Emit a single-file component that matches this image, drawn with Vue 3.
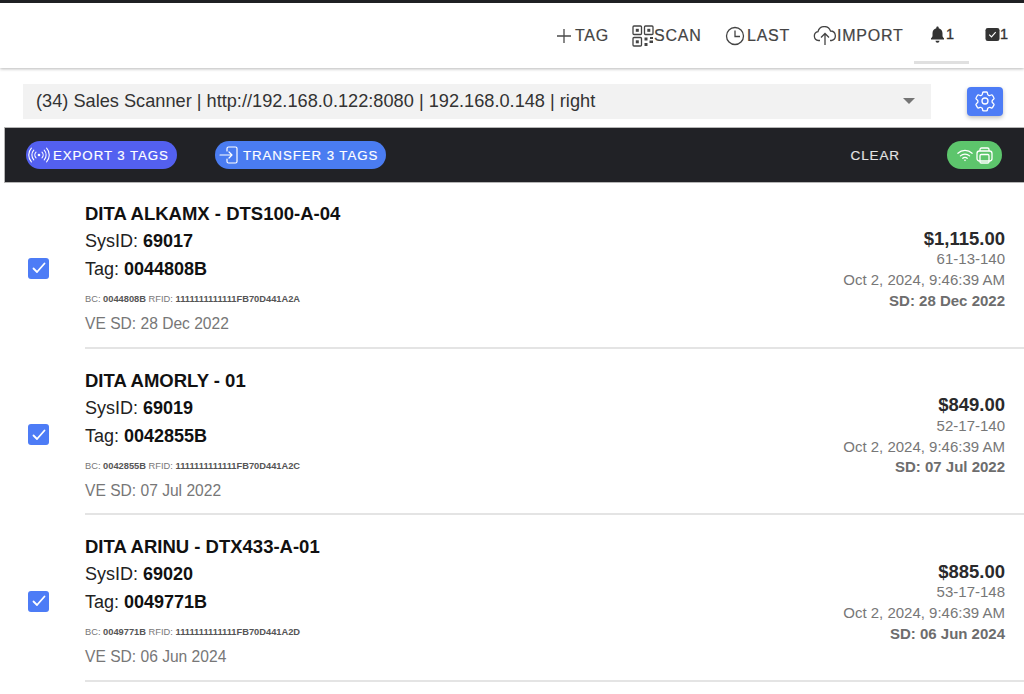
<script setup>
const rows = [
  { name: 'DITA ALKAMX - DTS100-A-04', sys: '69017', tag: '0044808B', rfid: '1111111111111FB70D441A2A', sd: '28 Dec 2022', price: '$1,115.00', size: '61-13-140' },
  { name: 'DITA AMORLY - 01', sys: '69019', tag: '0042855B', rfid: '1111111111111FB70D441A2C', sd: '07 Jul 2022', price: '$849.00', size: '52-17-140' },
  { name: 'DITA ARINU - DTX433-A-01', sys: '69020', tag: '0049771B', rfid: '1111111111111FB70D441A2D', sd: '06 Jun 2024', price: '$885.00', size: '53-17-148' },
]
</script>

<template>
  <div class="page">
    <header class="top">
      <nav class="nav">
        <a class="nav-item tag">
          <svg width="18" height="18" viewBox="0 0 18 18" fill="none" stroke="#4a4a4a" stroke-width="1.3"><path d="M9 2v14M2 9h14"/></svg>
          <span>TAG</span>
        </a>
        <a class="nav-item scan">
          <svg width="22" height="22" viewBox="0 0 22 22" fill="none" stroke="#444" stroke-width="1.3">
            <rect x="1" y="1" width="8.5" height="8.5" rx="1"/><rect x="12.5" y="1" width="8.5" height="8.5" rx="1"/><rect x="1" y="12.5" width="8.5" height="8.5" rx="1"/>
            <rect x="3.8" y="3.8" width="3" height="3" fill="#444" stroke="none"/><rect x="15.3" y="3.8" width="3" height="3" fill="#444" stroke="none"/><rect x="3.8" y="15.3" width="3" height="3" fill="#444" stroke="none"/>
            <path d="M12.5 12.5h3v3h-3zM17.5 15.5h3.500v2.500h-3.500zM12.500 18h3v3h-3zM18 12h3v2h-3z" fill="#444" stroke="none"/>
          </svg>
          <span>SCAN</span>
        </a>
        <a class="nav-item last">
          <svg width="20" height="20" viewBox="0 0 20 20" fill="none" stroke="#444" stroke-width="1.3"><circle cx="10" cy="10" r="8.500"/><path d="M10 4.500V10.500H15"/></svg>
          <span>LAST</span>
        </a>
        <a class="nav-item import">
          <svg width="24" height="20" viewBox="0 0 24 20" fill="none" stroke="#444" stroke-width="1.3"><path d="M7 14.500H5.500A4.500 4.500 0 0 1 5 5.600 6.500 6.500 0 0 1 17.500 5a4.800 4.800 0 0 1 1 9.500H17"/><path d="M12 19V8M8 11.500 12 7.500l4 4"/></svg>
          <span>IMPORT</span>
        </a>
        <a class="nav-item small bell">
          <svg width="17" height="17" viewBox="0 0 16 17" fill="#333"><path d="M8 0.500c.7 0 1.200.5 1.200 1.200v.5c2.400.6 3.800 2.600 3.800 5v2.600c0 1 .6 1.700 1.500 2.500v1.100H1.500v-1.100C2.400 11.500 3 10.800 3 9.800V7.200c0-2.400 1.400-4.400 3.800-5v-.5C6.800 1 7.300.5 8 .5zM6 14.800h4a2 2 0 0 1-4 0z"/></svg>
          <span>1</span>
        </a>
        <a class="nav-item small check">
          <svg width="15" height="15" viewBox="0 0 16 16"><rect x="0.500" y="1" width="15" height="14" rx="2.500" fill="#333"/><path d="M4.500 8.200l2.400 2.300 4.500-5" fill="none" stroke="#fff" stroke-width="1.200"/></svg>
          <span>1</span>
        </a>
      </nav>
    </header>

    <section class="select-row">
      <div class="select">
        <span>(34) Sales Scanner | http://192.168.0.122:8080 | 192.168.0.148 | right</span>
        <i class="caret"></i>
      </div>
      <button class="gear">
        <svg width="24" height="24" viewBox="0 0 24 24" fill="none" stroke="#fff" stroke-width="1.300" stroke-linecap="round" stroke-linejoin="round"><path d="M9.600 3.900c.1-.5.600-.9 1.100-.9h2.600c.5 0 1 .4 1.100.9l.2 1.300c.1.400.3.700.7.900l.6.300c.3.200.7.200 1 .1l1.300-.5c.5-.2 1.100 0 1.400.5l1.300 2.300c.3.500.1 1.100-.3 1.400l-1 .9c-.3.200-.5.600-.5 1v.7c0 .4.200.8.500 1l1 .9c.4.300.6.900.3 1.400l-1.300 2.300c-.3.500-.9.700-1.400.5l-1.300-.5c-.3-.1-.7-.1-1 .1l-.6.300c-.4.200-.6.500-.7.900l-.2 1.300c-.1.500-.6.900-1.100.9h-2.600c-.5 0-1-.4-1.100-.9l-.2-1.300c-.1-.4-.3-.7-.7-.9l-.6-.3c-.3-.2-.7-.2-1-.1l-1.300.5c-.5.200-1.100 0-1.400-.5l-1.300-2.300c-.3-.5-.1-1.100.3-1.400l1-.9c.3-.2.500-.6.500-1v-.7c0-.4-.2-.8-.5-1l-1-.9c-.4-.3-.6-.9-.3-1.400l1.300-2.300c.3-.5.900-.7 1.400-.5l1.300.5c.3.100.7.100 1-.1l.6-.3c.4-.2.600-.5.700-.9z"/><circle cx="12" cy="12" r="3"/></svg>
      </button>
    </section>

    <section class="bar">
      <button class="pill export">
        <svg width="22" height="16" viewBox="0 0 22 16" fill="none" stroke="#fff" stroke-width="1.100" stroke-linecap="round"><circle cx="11" cy="8" r="1.300" fill="#fff" stroke="none"/><path d="M8 5.200a4 4 0 0 0 0 5.600M14 5.200a4 4 0 0 1 0 5.600M5.800 3.200a7 7 0 0 0 0 9.600M16.200 3.200a7 7 0 0 1 0 9.600M3.400 1.200a10 10 0 0 0 0 13.600M18.600 1.200a10 10 0 0 1 0 13.600"/></svg>
        <span>EXPORT 3 TAGS</span>
      </button>
      <button class="pill transfer">
        <svg width="20" height="18" viewBox="0 0 20 18" fill="none" stroke="#fff" stroke-width="1.200" stroke-linecap="round" stroke-linejoin="round"><path d="M8 5V2.500A1.500 1.500 0 0 1 9.500 1h7A1.500 1.500 0 0 1 18 2.500v13a1.500 1.500 0 0 1-1.500 1.500h-7A1.500 1.500 0 0 1 8 15.500V13"/><path d="M1 9h12M10 6l3 3-3 3"/></svg>
        <span>TRANSFER 3 TAGS</span>
      </button>
      <span class="spacer"></span>
      <button class="clear">CLEAR</button>
      <button class="pill status">
        <svg width="16" height="14" viewBox="0 0 18 14" fill="none" stroke="#fff" stroke-width="1.400" stroke-linecap="round"><path d="M1 5a11.500 11.500 0 0 1 16 0M3.800 8a7.500 7.500 0 0 1 10.400 0M6.500 10.700a3.500 3.500 0 0 1 5 0"/><circle cx="9" cy="13" r=".9" fill="#fff" stroke="none"/></svg>
        <svg width="17" height="17" viewBox="0 0 17 17" fill="none" stroke="#fff" stroke-width="1.300" stroke-linejoin="round"><path d="M4 4V2.500A1.500 1.500 0 0 1 5.500 1h6A1.500 1.500 0 0 1 13 2.500V4"/><rect x="1" y="4" width="15" height="10" rx="2.500"/><rect x="4" y="7.500" width="9" height="8.500" rx="1.200"/></svg>
      </button>
    </section>

    <ul class="list">
      <li v-for="r in rows" :key="r.tag" class="row">
        <span class="check-cell">
          <span class="box">
            <svg width="14" height="12" viewBox="0 0 14 12" fill="none" stroke="#fff" stroke-width="1.800" stroke-linecap="round" stroke-linejoin="round"><path d="M1.500 6.500 5 10l7.500-8.500"/></svg>
          </span>
        </span>
        <div class="body">
          <div class="left">
            <h3>{{ r.name }}</h3>
            <p class="line">SysID: <b>{{ r.sys }}</b></p>
            <p class="line">Tag: <b>{{ r.tag }}</b></p>
            <p class="codes">BC: <b>{{ r.tag }}</b> RFID: <b>{{ r.rfid }}</b></p>
            <p class="ve">VE SD: {{ r.sd }}</p>
          </div>
          <div class="right">
            <p class="price">{{ r.price }}</p>
            <p>{{ r.size }}</p>
            <p>Oct 2, 2024, 9:46:39 AM</p>
            <p class="sd">SD: {{ r.sd }}</p>
          </div>
        </div>
      </li>
    </ul>
  </div>
</template>

<style>
html, body { margin: 0; background: #fff; }
</style>

<style scoped>
.page {
  width: 1024px;
  height: 694px;
  overflow: hidden;
  background: #fff;
  font-family: "Liberation Sans", Arial, sans-serif;
  color: #1c1c1e;
  box-sizing: border-box;
}
.top {
  height: 65px;
  border-top: 3px solid #1f2023;
  box-shadow: 0 1px 3px rgba(0, 0, 0, .28);
  box-sizing: content-box;
}
.nav {
  display: flex;
  justify-content: flex-end;
  height: 100%;
}
.nav-item {
  display: flex;
  align-items: center;
  font-size: 16px;
  letter-spacing: .75px;
  color: #444;
  position: relative;
  white-space: nowrap;
  -webkit-text-stroke: .2px #444;
}
.nav-item svg { flex: none; }
.nav-item.tag { width: 53px; gap: 2px; margin-right: 24px; }
.nav-item.scan { width: 69px; gap: 0; margin-right: 24px; }
.nav-item.last { width: 64px; gap: 2px; margin-right: 24px; }
.nav-item.import { width: 89px; margin-right: 12px; }
.nav-item.small { font-size: 14.500px; color: #333; letter-spacing: 0; padding-bottom: 3px; -webkit-text-stroke: .35px #333; }
.nav-item.bell { width: 55px; justify-content: center; margin-right: 16px; }
.nav-item.bell::after {
  content: "";
  position: absolute;
  left: 0;
  right: 0;
  bottom: 4px;
  height: 3px;
  background: #e0e0e0;
}
.nav-item.check { width: 23px; margin-right: 16px; }
.select-row {
  display: flex;
  align-items: center;
  height: 60px;
  padding: 0 21px 0 23px;
  justify-content: space-between;
}
.select {
  width: 908px;
  height: 35px;
  margin-top: 6px;
  background: #f2f2f2;
  display: flex;
  align-items: center;
  justify-content: space-between;
  padding: 0 16px 0 13px;
  box-sizing: border-box;
  font-size: 18.200px;
  color: #333;
}
.caret {
  width: 0;
  height: 0;
  border-left: 6px solid transparent;
  border-right: 6px solid transparent;
  border-top: 6px solid #757575;
}
.gear {
  width: 36px;
  height: 29px;
  margin-top: 6px;
  border: 0;
  padding: 0;
  border-radius: 4px;
  background: #4d7cf6;
  box-shadow: 0 2px 4px rgba(0, 0, 0, .25);
  display: flex;
  align-items: center;
  justify-content: center;
}
.bar {
  margin-left: 5px;
  height: 54px;
  background: #212226;
  box-shadow: 0 0 0 1px #b5b5b5;
  display: flex;
  align-items: center;
  padding: 0 22px 0 21px;
  box-sizing: border-box;
}
.pill {
  height: 28px;
  border: 0;
  border-radius: 14px;
  display: flex;
  align-items: center;
  padding: 0;
  color: #fff;
  font: 13.300px "Liberation Sans", Arial, sans-serif;
  letter-spacing: .92px;
  white-space: nowrap;
  box-sizing: border-box;
  flex: none;
  -webkit-text-stroke: .15px #fff;
}
.pill svg { flex: none; }
.export { width: 151px; background: #5360f0; padding-left: 2px; gap: 3px; margin-right: 38px; }
.transfer { width: 171px; background: #4a7cf1; padding-left: 4px; gap: 4px; }
.spacer { flex: 1; }
.clear {
  border: 0;
  background: none;
  padding: 0;
  margin-right: 47px;
  color: #e4e4e4;
  font: 13.500px "Liberation Sans", Arial, sans-serif;
  letter-spacing: .9px;
  -webkit-text-stroke: .15px #e4e4e4;
}
.status { width: 55px; background: #5dc56c; justify-content: center; gap: 3px; }
.list { list-style: none; margin: 0; padding: 0; }
.row {
  display: flex;
  height: 166.500px;
}
.check-cell {
  width: 85px;
  flex: none;
  display: flex;
  align-items: center;
  padding: 6px 0 0 28px;
  box-sizing: border-box;
}
.box {
  width: 21px;
  height: 21px;
  border-radius: 3px;
  background: #4d7cf6;
  display: flex;
  align-items: center;
  justify-content: center;
}
.body {
  flex: 1;
  display: flex;
  justify-content: space-between;
  align-items: flex-start;
  padding: 0 19px 0 0;
  border-bottom: 2px solid #e4e4e4;
  box-sizing: border-box;
}
p, h3 { margin: 0; }
h3 { font-size: 18.500px; line-height: 27px; font-weight: 700; color: #111; }
.left { padding-top: 18px; }
.line { font-size: 18px; line-height: 28px; color: #222; }
.line b { color: #111; }
.codes { font-size: 9.300px; line-height: 12px; margin-top: 10px; color: #777; }
.codes b { color: #555; }
.ve { font-size: 15.600px; line-height: 20px; margin-top: 9px; color: #777; }
.right { text-align: right; font-size: 15px; line-height: 20.700px; color: #777; padding-top: 45.600px; }
.price { font-size: 18.500px; font-weight: 700; color: #2a2a2c; line-height: 21.700px; }
.sd { font-weight: 700; color: #6d6d6d; }
</style>
